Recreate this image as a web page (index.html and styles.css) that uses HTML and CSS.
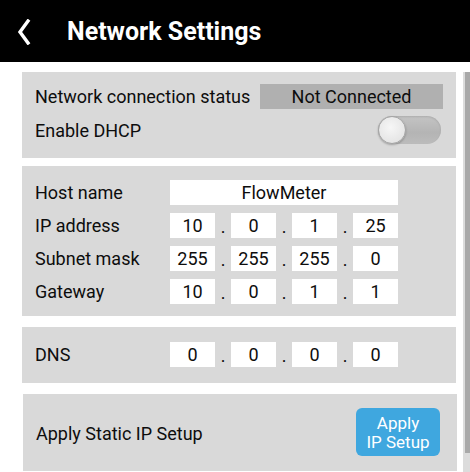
FILE: index.html
```html
<!DOCTYPE html>
<html>
<head>
<meta charset="utf-8">
<link rel="stylesheet" href="styles.css">
</head>
<body>
<header class="topbar">
  <svg class="back" width="14" height="26" viewBox="0 0 14 26"><polyline points="11,2 3,13 11,24" fill="none" stroke="#fff" stroke-width="3.4" stroke-linecap="square" stroke-linejoin="miter"/></svg>
  <h1 class="title">Network Settings</h1>
</header>
<div class="main">
  <div class="content">
    <section class="panel p1">
      <div class="row r-status">
        <span class="label">Network connection status</span>
        <span class="status">Not Connected</span>
      </div>
      <div class="row r-dhcp">
        <span class="label">Enable DHCP</span>
        <span class="toggle"><span class="thumb"></span></span>
      </div>
    </section>
    <section class="panel p2">
      <div class="row field">
        <span class="label w">Host name</span>
        <span class="box host">FlowMeter</span>
      </div>
      <div class="row field">
        <span class="label w">IP address</span>
        <span class="ip"><span class="box oct">10</span><span class="dot">.</span><span class="box oct">0</span><span class="dot">.</span><span class="box oct">1</span><span class="dot">.</span><span class="box oct">25</span></span>
      </div>
      <div class="row field">
        <span class="label w">Subnet mask</span>
        <span class="ip"><span class="box oct">255</span><span class="dot">.</span><span class="box oct">255</span><span class="dot">.</span><span class="box oct">255</span><span class="dot">.</span><span class="box oct">0</span></span>
      </div>
      <div class="row field">
        <span class="label w">Gateway</span>
        <span class="ip"><span class="box oct">10</span><span class="dot">.</span><span class="box oct">0</span><span class="dot">.</span><span class="box oct">1</span><span class="dot">.</span><span class="box oct">1</span></span>
      </div>
    </section>
    <section class="panel p3">
      <div class="row field">
        <span class="label w">DNS</span>
        <span class="ip"><span class="box oct">0</span><span class="dot">.</span><span class="box oct">0</span><span class="dot">.</span><span class="box oct">0</span><span class="dot">.</span><span class="box oct">0</span></span>
      </div>
    </section>
    <section class="panel p4">
      <span class="label">Apply Static IP Setup</span>
      <button class="apply"><span class="bl">Apply</span><span class="bl">IP Setup</span></button>
    </section>
  </div>
  <div class="scrollbar"><div class="sthumb"></div></div>
</div>
</body>
</html>
```
FILE: styles.css
```css
* { box-sizing: border-box; }
html, body { margin: 0; padding: 0; background: #fff; overflow: hidden; }
body { font-family: Roboto, "Liberation Sans", sans-serif; color: #0d0d0d; width: 470px; height: 472px; }

.topbar { height: 62px; background: #000; display: flex; align-items: center; }
.back { margin-left: 17px; margin-top: 1px; flex: none; }
.title { margin: 0 0 0 36px; color: #fff; font-size: 25px; font-weight: 700; line-height: 1; }

.main { display: flex; padding-top: 10px; }
.content { margin-left: 22px; width: 435px; }
.scrollbar { margin-left: 6px; width: 7px; height: 400px; background: #dcdcdc; display: flex; justify-content: flex-end; }
.sthumb { width: 5px; height: 381px; background: #a9a9a9; }

.panel { background: #d9d9d9; width: 434px; }
.p1 { padding: 12px 13px 14px 13px; }
.p2 { margin-top: 8px; padding: 14px 13px 12px 13px; }
.p3 { margin-top: 11px; padding: 15px 13px 16px 13px; }
.p4 { margin-top: 11px; margin-left: 1px; padding: 14px 17px 15px 13px; display: flex; align-items: center; justify-content: space-between; }

.row { display: flex; align-items: center; }
.label { font-size: 18px; line-height: 21px; white-space: nowrap; }
.r-status { justify-content: space-between; height: 25px; }
.r-dhcp { justify-content: space-between; height: 28px; margin-top: 7px; padding-right: 2px; }
.status { width: 183px; height: 25px; background: #b0b0b0; font-size: 18px; display: flex; align-items: center; justify-content: center; }

.toggle { position: relative; width: 63px; height: 28px; border-radius: 14px; background: linear-gradient(to bottom, #c4c4c4, #b4b4b4 60%, #bcbcbc); box-shadow: inset 0 1px 2px rgba(0,0,0,0.12); }
.thumb { position: absolute; left: 0; top: 0; width: 28px; height: 28px; border-radius: 50%; background: radial-gradient(circle at 45% 40%, #f6f6f6, #e6e6e6 70%, #d4d4d4); border: 1px solid #a5a5a5; box-shadow: 0 1px 2px rgba(0,0,0,0.25); }

.field { height: 25px; }
.field + .field { margin-top: 8px; }
.w { width: 135px; }
.box { background: #fff; height: 25px; font-size: 18px; display: flex; align-items: center; justify-content: center; }
.host { width: 228px; }
.ip { display: flex; align-items: center; }
.oct { width: 45px; }
.dot { width: 16px; text-align: center; font-size: 18px; line-height: 25px; padding-top: 2px; }

.apply { width: 84px; height: 48px; border: none; border-radius: 6px; background: #3fa7df; color: #fff; font-family: Roboto, "Liberation Sans", sans-serif; font-size: 17px; padding: 1px 0 0 0; display: flex; flex-direction: column; align-items: center; justify-content: center; }
.bl { display: block; line-height: 19px; }
.p4 .label { padding-top: 2px; }
```
